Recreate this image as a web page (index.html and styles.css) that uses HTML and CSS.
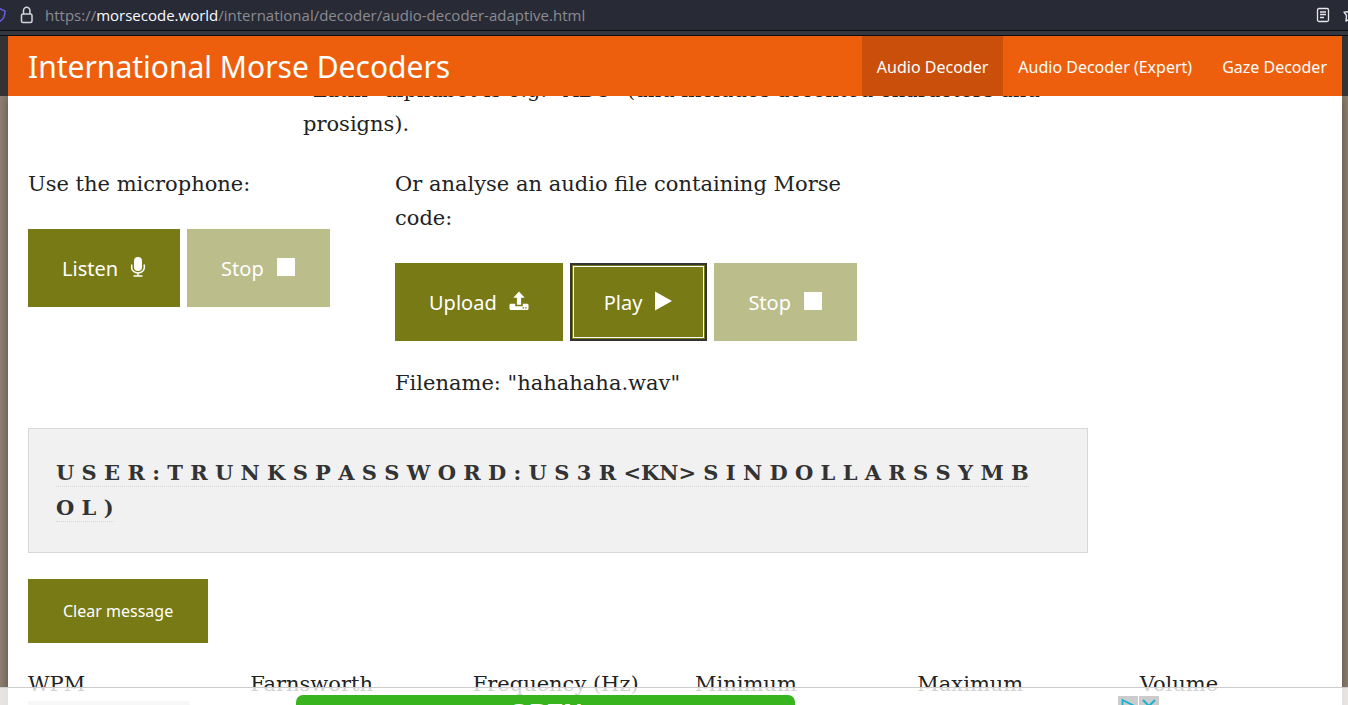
FILE: index.html
```html
<!DOCTYPE html>
<html lang="en">
<head>
<meta charset="utf-8">
<title>International Morse Decoders</title>
<link rel="stylesheet" href="styles.css">
</head>
<body>
<div class="browser-bar">
  <svg class="shield" width="6" height="20" viewBox="0 0 6 20" fill="none" stroke="#6a5ce0" stroke-width="1.5"><path d="M-1 3Q2 5 5 6Q5 14-1 17"/></svg>
  <svg class="lock" width="14" height="18" viewBox="0 0 14 18" fill="none" stroke="#d4d5da" stroke-width="1.5"><rect x="1.5" y="8" width="10.5" height="8.5" rx="1.5"/><path d="M3.5 8V4.5a3.2 3.2 0 0 1 6.4 0V8"/></svg>
  <span class="url">https://<span class="host">morsecode.world</span>/international/decoder/audio-decoder-adaptive.html</span>
  <svg class="reader" width="14" height="16" viewBox="0 0 14 16" fill="none" stroke="#e6e6ea" stroke-width="1.3"><rect x="1.5" y="1.5" width="11" height="13" rx="1.5"/><path d="M4 5h6M4 7.500h6M4 10.500h4"/></svg>
  <svg class="star" width="6" height="18" viewBox="0 0 6 18" fill="none" stroke="#e6e6ea" stroke-width="1.4" stroke-linejoin="round"><path d="M8 5.500L2 6.200 4.500 9.500 4 15 8 13"/></svg>
</div>
<div class="page">
  <header class="topbar">
    <div class="topbar-inner">
      <h1 class="title">International Morse Decoders</h1>
      <nav class="nav">
        <a class="nav-link active" href="#audio">Audio Decoder</a>
        <a class="nav-link" href="#expert">Audio Decoder (Expert)</a>
        <a class="nav-link" href="#gaze">Gaze Decoder</a>
      </nav>
    </div>
  </header>
  <main class="content">
    <p class="note">"Latin" alphabet is e.g. "ABC" (and includes accented characters and prosigns).</p>
    <div class="sources">
      <section class="source">
        <p class="lead">Use the microphone:</p>
        <div class="buttons">
          <button class="btn" type="button">Listen <svg class="icon" width="16" height="20" viewBox="0 0 16 20"><rect x="4" y="0" width="8" height="14" rx="4" fill="#fff"/><path d="M1.700 7.500v3.200a6.300 5.300 0 0 0 12.600 0V7.500M8 16v3M3.500 19h9" fill="none" stroke="#fff" stroke-width="1.500"/></svg></button>
          <button class="btn" type="button" disabled>Stop <svg class="icon" width="20" height="20" viewBox="0 0 20 20"><path d="M1 1h18v18H1z" fill="#fff"/></svg></button>
        </div>
      </section>
      <section class="source">
        <p class="lead">Or analyse an audio file containing Morse code:</p>
        <div class="buttons">
          <button class="btn" type="button">Upload <svg class="icon" width="20" height="20" viewBox="0 0 21 20"><path d="M10.500 0L16.500 6.500H12.700V14H8.300V6.500H4.500z" fill="#fff"/><path d="M1.500 13H6.500V15.500H14.500V13H19.500L20.500 14V18.500L19.500 19.500H1.500L.5 18.500V14z" fill="#fff"/><path d="M14.200 16.500h1.500v1.500h-1.500zM17 16.500h1.500v1.500H17z" fill="#777a15"/></svg></button>
          <button class="btn focused" type="button">Play <svg class="icon" width="19" height="20" viewBox="0 0 19 20"><path d="M1 .5L18 10 1 19.500z" fill="#fff"/></svg></button>
          <button class="btn" type="button" disabled>Stop <svg class="icon" width="20" height="20" viewBox="0 0 20 20"><path d="M1 1h18v18H1z" fill="#fff"/></svg></button>
        </div>
        <p class="filename">Filename: "hahahaha.wav"</p>
      </section>
    </div>
    <div class="message"><span class="decoded">U S E R : T R U N K S P A S S W O R D : U S 3 R &lt;KN&gt; S I N D O L L A R S S Y M B O L )</span></div>
    <button class="btn small" type="button">Clear message</button>
    <div class="settings">
      <label class="setting">WPM<input class="field" type="text"></label>
      <span class="setting">Farnsworth</span>
      <span class="setting">Frequency (Hz)</span>
      <span class="setting">Minimum</span>
      <span class="setting">Maximum</span>
      <span class="setting">Volume</span>
    </div>
  </main>
</div>
<aside class="ad">
  <a class="ad-open" href="#open">OPEN</a>
  <div class="ad-marks">
    <svg width="20" height="20" viewBox="0 0 20 20" fill="none" stroke="#18b2cf" stroke-width="1.800"><path d="M0 0h20v20H0z" fill="#ccc" stroke="none"/><path d="M4.500 4L16.500 10 4.500 16z"/></svg>
    <svg width="20" height="20" viewBox="0 0 20 20" fill="none" stroke="#18b2cf" stroke-width="2"><path d="M0 0h20v20H0z" fill="#ccc" stroke="none"/><path d="M4 4L16 16M16 4L4 16"/></svg>
  </div>
</aside>
</body>
</html>
```
FILE: styles.css
```css
* { box-sizing: border-box; }
body {
  margin: 0;
  height: 100vh;
  overflow: hidden;
  display: flex;
  flex-direction: column;
  font-family: "DejaVu Serif", serif;
  font-size: 21px;
  line-height: 34px;
  color: #222;
  background: #8f8071;
}
.browser-bar {
  height: 36px;
  flex: none;
  display: flex;
  align-items: center;
  background: #282a36;
  border-bottom: 1px solid #0c0d10;
  box-shadow: inset 0 -4px #34373f, inset 0 -5px #0c0d10;
  padding-bottom: 5px;
  font-family: "Open Sans", "Noto Sans", sans-serif;
  font-size: 15px;
  line-height: 20px;
  color: #8b8c91;
}
.lock { margin: 0 11px 0 14px; }
.url { flex: 1; }
.host { color: #fbfbfe; }
.reader { margin-right: 12px; }
.page { flex: 1; min-height: 0; overflow: hidden; }
.topbar {
  position: relative;
  z-index: 1;
  background: #333;
  padding: 0 6px 0 8px;
}
.topbar-inner {
  height: 60px;
  display: flex;
  justify-content: space-between;
  align-items: center;
  padding-left: 20px;
  background: #ed5f0c;
  color: #fff;
  font-family: "Noto Sans", sans-serif;
}
.title { margin: 0; padding-top: 2px; font-size: 30px; font-weight: 400; }
.nav { display: flex; }
.nav-link {
  padding: 0 15px;
  line-height: 62px;
  height: 60px;
  font-size: 16px;
  color: #fff;
  text-decoration: none;
}
.active { background: #c94f0a; }
.content {
  margin: 0 6px 0 8px;
  min-height: 100%;
  background: #fff;
  box-shadow: 0 0 10px rgba(0, 0, 0, .4);
  display: flow-root;
}
p { margin: 0; }
.note { margin: -23px 270px 26px 295px; }
.sources { display: grid; grid-template-columns: 367px minmax(0, 502px); }
.source { padding: 0 20px; }
.buttons { display: flex; gap: 7px; margin: 28px 0 25px; white-space: nowrap; }
.btn {
  height: 78px;
  padding: 0 34px;
  display: flex;
  align-items: center;
  gap: 12px;
  border: 0;
  background: #777a15;
  color: #fff;
  font-family: "Noto Sans", sans-serif;
  font-size: 20px;
}
.btn:disabled { background: #bbbd8a; color: #fff; }
.icon { margin-bottom: 2px; }
.focused { border: 2px solid #333; padding: 0 32px; outline: 1px solid #fff; outline-offset: -4px; }
.message {
  max-width: 1060px;
  margin: 28px 20px 26px;
  padding: 26px 36px 27px 27px;
  border: 1px solid #d8d8d8;
  background: #f1f1f1;
  color: #333;
  font-weight: 700;
  line-height: 35px;
}
.decoded { padding-bottom: 1px; border-bottom: 1px dotted #d4d4d4; }
.small { height: 64px; margin-left: 20px; padding: 0 35px; font-size: 16px; }
.settings { display: grid; grid-template-columns: repeat(6, 1fr); margin-top: 24px; }
.setting { padding: 0 20px; }
.field { display: block; width: 162px; height: 40px; border: 0; background: #d6d6d6; }
.ad {
  position: fixed;
  left: 0;
  right: 0;
  bottom: 0;
  height: 18px;
  overflow: hidden;
  display: flex;
  padding: 7px 189px 0 296px;
  justify-content: space-between;
  border-top: 1px solid #ccc;
  background: rgba(255, 255, 255, .8);
}
.ad-open {
  width: 499px;
  height: 40px;
  border-radius: 7px 7px 0 0;
  background: #38b41e;
  color: #fff;
  text-align: center;
  text-decoration: none;
  font: 700 26px/36px "Liberation Sans", sans-serif;
}
.ad-marks { display: flex; gap: 1px; padding-top: 1px; }
```
